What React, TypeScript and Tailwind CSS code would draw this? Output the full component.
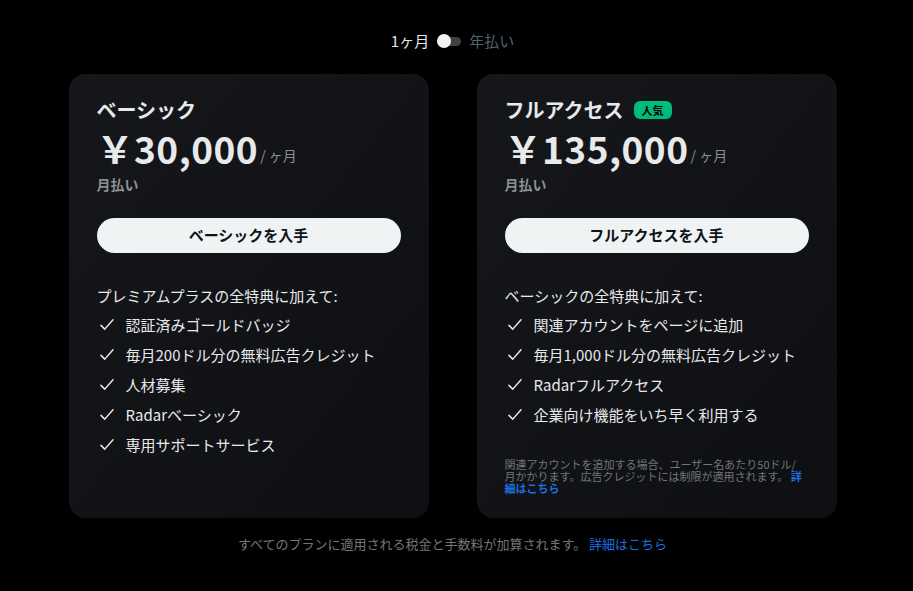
import React from "react";

const font = { fontFamily: '"Noto Sans CJK JP", "Noto Sans", sans-serif' };

function Check() {
  return (
    <svg width="18" height="18" viewBox="0 0 24 24" className="shrink-0" fill="none">
      <path d="M4 12.5l5 5L20 5" stroke="#e7e9ea" strokeWidth="2" strokeLinecap="round" strokeLinejoin="round" />
    </svg>
  );
}

function Card({
  title,
  badge,
  price,
  cta,
  intro,
  items,
  note,
}: {
  title: string;
  badge?: boolean;
  price: string;
  cta: string;
  intro: string;
  items: string[];
  note?: boolean;
}) {
  return (
    <div className="w-[360px] h-[444px] rounded-2xl bg-gradient-to-br from-[#15171b] to-[#0e0f12] px-7 pt-[22px] flex flex-col">
      <div className="flex items-center gap-[10px] h-[28px]">
        <span className="text-[20px] leading-[28px] font-bold text-[#e7e9ea]">{title}</span>
        {badge && (
          <span className="rounded-md bg-[#00ba7c] px-[8px] h-[18px] flex items-center text-[11px] leading-[16px] font-bold text-black">人気</span>
        )}
      </div>
      <div className="flex items-end mt-[3px] h-[42px]">
        <span className="text-[37px] leading-[42px] font-bold text-[#e7e9ea] tracking-[0.5px]">{price}</span>
        <span className="text-[14px] leading-[18px] text-[#8b8f94] mb-[5px] ml-[2px]">/ ヶ月</span>
      </div>
      <div className="text-[14px] leading-[20px] font-bold text-[#8b8f94] mt-[5px]">月払い</div>
      <button className="mt-[24px] h-[35px] w-[304px] rounded-full bg-[#eff3f4] text-[15px] font-bold text-[#0f1419]">{cta}</button>
      <div className="mt-[32px] text-[15px] text-[#e7e9ea] leading-[22px]">{intro}</div>
      <ul className="mt-[3px] flex flex-col">
        {items.map((it) => (
          <li key={it} className="flex items-center gap-[10px] h-[30px] pl-[1px] text-[15px] text-[#e7e9ea]">
            <Check />
            <span>{it}</span>
          </li>
        ))}
      </ul>
      {note && (
        <p className="mt-[28px] text-[11px] leading-[12px] text-[#71767b] pr-[6px]">
          関連アカウントを追加する場合、ユーザー名あたり50ドル/月かかります。広告クレジットには制限が適用されます。
          <span className="text-[#1d6fe0] font-bold"> 詳細はこちら</span>
        </p>
      )}
    </div>
  );
}

export default function App() {
  return (
    <div className="w-[913px] h-[591px] bg-black flex flex-col items-center pr-[8px]" style={font}>
      <div className="mt-[31px] flex items-center gap-[8px] h-[20px]">
        <span className="text-[15px] text-[#e7e9ea]">1ヶ月</span>
        <div className="relative w-[24px] h-[14px] flex items-center">
          <div className="w-[24px] h-[9px] rounded-full bg-[#3e4144]" />
          <div className="absolute left-0 top-0 w-[14px] h-[14px] rounded-full bg-[#eff3f4]" />
        </div>
        <span className="text-[15px] text-[#536471]">年払い</span>
      </div>
      <div className="mt-[23px] flex gap-[48px]">
        <Card
          title="ベーシック"
          price="￥30,000"
          cta="ベーシックを入手"
          intro="プレミアムプラスの全特典に加えて:"
          items={["認証済みゴールドバッジ", "毎月200ドル分の無料広告クレジット", "人材募集", "Radarベーシック", "専用サポートサービス"]}
        />
        <Card
          title="フルアクセス"
          badge
          price="￥135,000"
          cta="フルアクセスを入手"
          intro="ベーシックの全特典に加えて:"
          items={["関連アカウントをページに追加", "毎月1,000ドル分の無料広告クレジット", "Radarフルアクセス", "企業向け機能をいち早く利用する"]}
          note
        />
      </div>
      <div className="mt-[16px] text-[13px] text-[#71767b]">
        すべてのプランに適用される税金と手数料が加算されます。
        <span className="text-[#1d6fe0]"> 詳細はこちら</span>
      </div>
    </div>
  );
}
